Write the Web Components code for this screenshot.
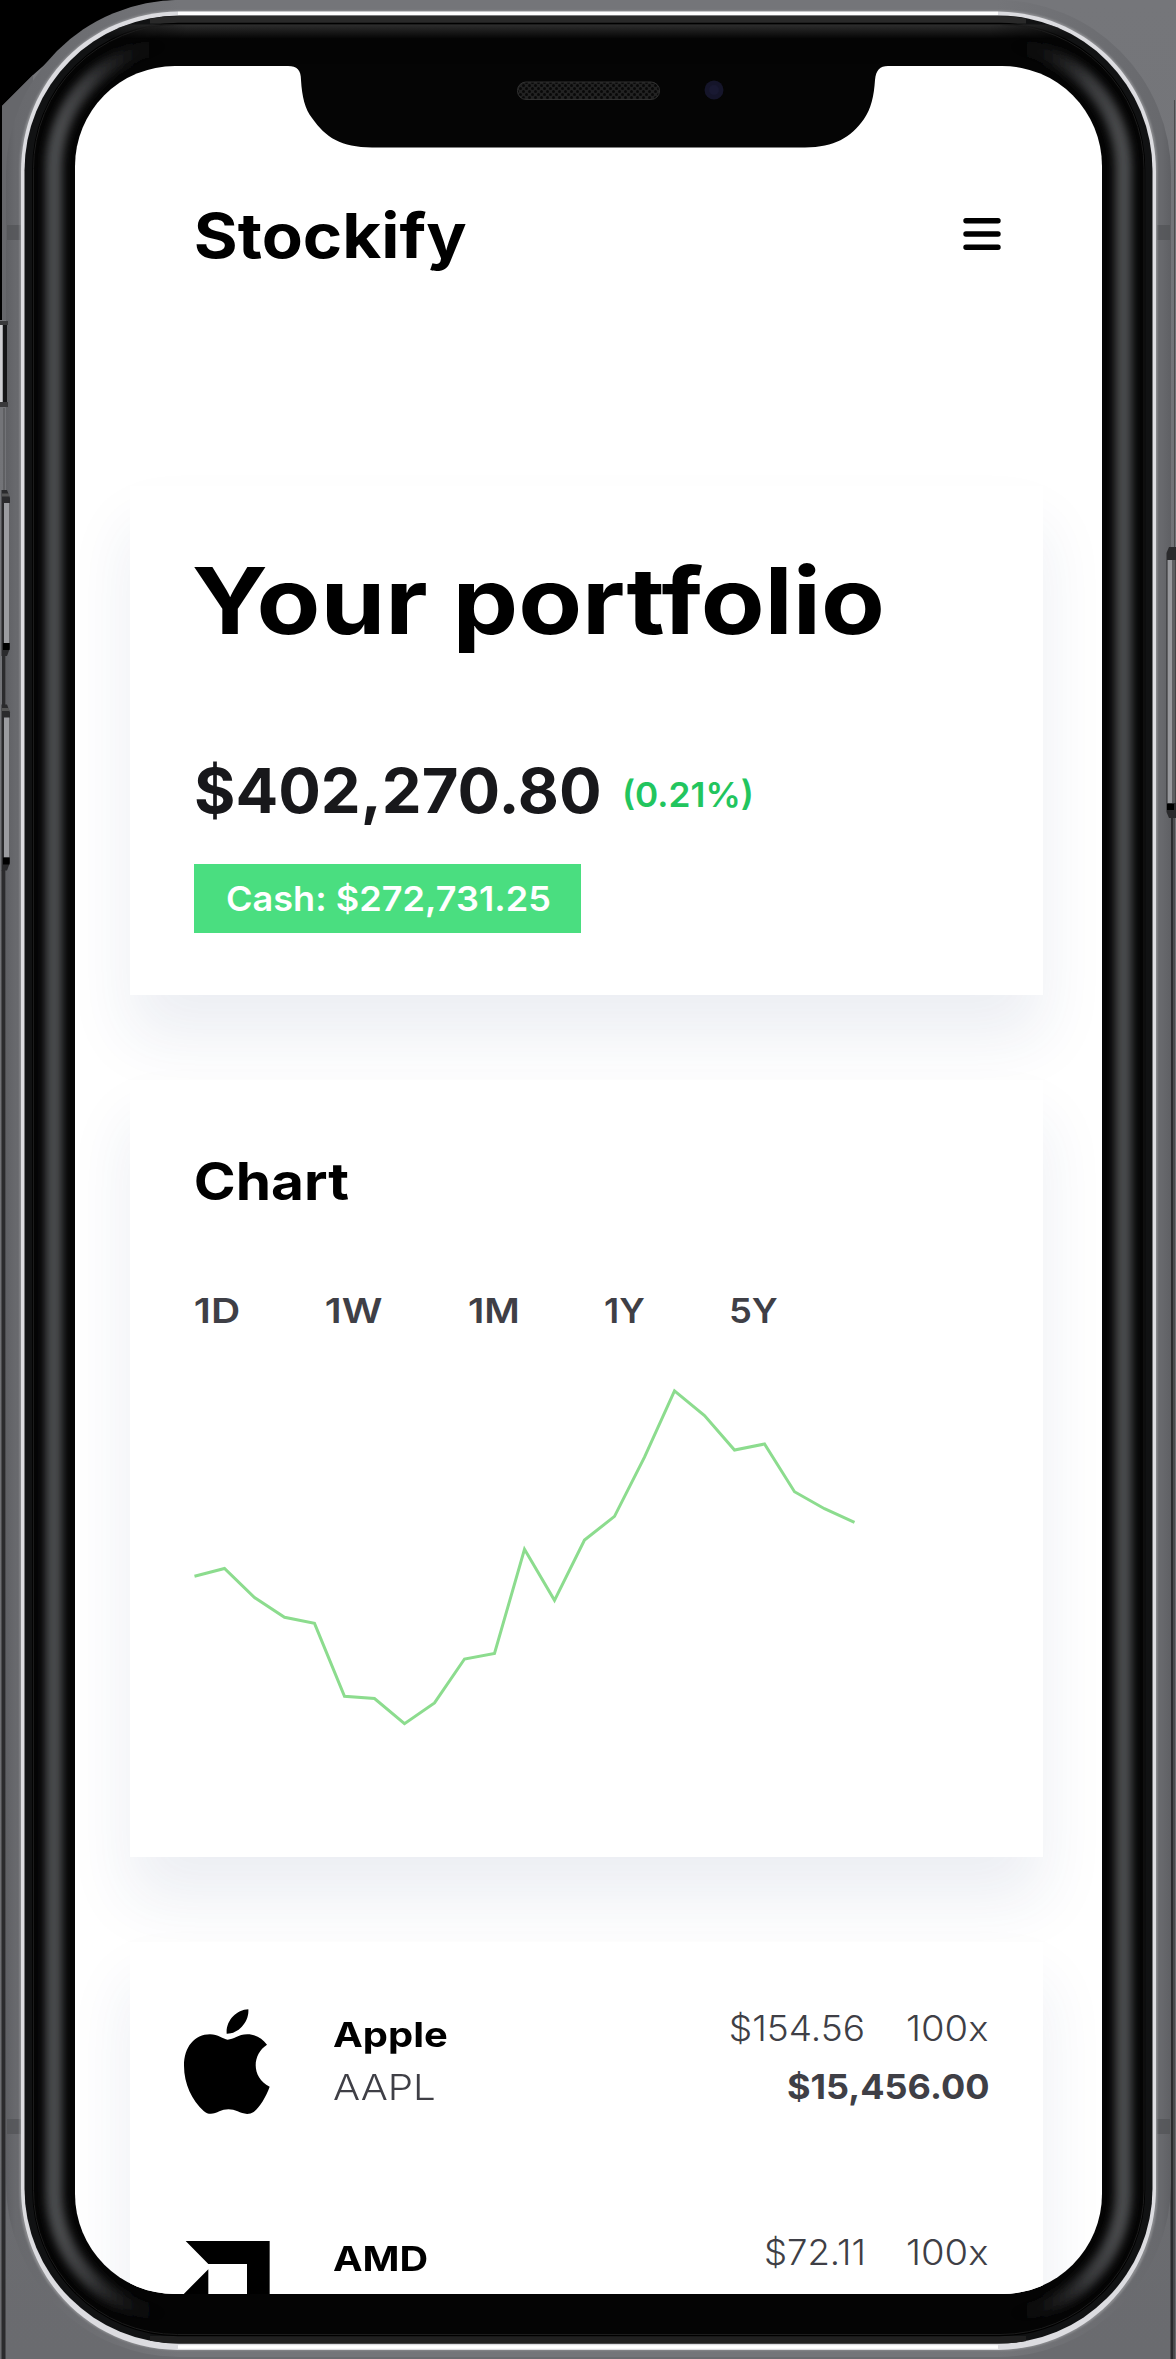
<!DOCTYPE html>
<html lang="en">
<head>
<meta charset="utf-8">
<title>Stockify</title>
<style>
html,body{margin:0;padding:0;background:#6d6e72}
body{width:1176px;height:2359px;overflow:hidden;font-family:Inter,"Open Sans",sans-serif}
</style>
</head>
<body>
<device-frame>
  <app-header></app-header>
  <portfolio-card></portfolio-card>
  <chart-card></chart-card>
  <holdings-card>
    <holding-row name="Apple,114" ticker="AAPL,101" price="$154.56,132" qty="100x,81" total="$15,456.00,200">
      <svg slot="icon" width="86" height="105" viewBox="70 86 258 315" style="display:block;margin-top:10px"><path d="M198 160C195 122 227 88 263 87C266 124 233 161 198 160ZM201 178C219 178 232 162 260 162C284 162 304 173 319 193C274 222 271 291 327 319C315 352 297 380 279 395C264 405 245 400 231 393C213 384 192 385 176 393C161 401 143 405 129 392C94 360 70 310 70 256C70 200 102 162 148 162C172 162 187 177 201 178Z"/></svg>
    </holding-row>
    <holding-row name="AMD,94" ticker="AMD,82" price="$72.11,97" qty="100x,81" total="$7,211.00,160">
      <svg slot="icon" width="86" height="86" viewBox="70 784 258 258" style="display:block;margin-top:18px"><path d="M75 784H327V1037L259 969V853H143ZM143 869V972H246L176 1041H70V942Z"/></svg>
    </holding-row>
  </holdings-card>
</device-frame>
<script>
const mount=(el,html)=>{el.attachShadow({mode:'open'}).innerHTML=html;return el.shadowRoot};

/* Text whose ink spans exactly the width given in "w". */
customElements.define('fit-text',class extends HTMLElement{
  connectedCallback(){
    if(this.shadowRoot)return;
    const r=mount(this,`<style>:host{display:block;flex:none;white-space:nowrap}span{display:inline-block;transform-origin:0 50%}</style><span><slot></slot></span>`);
    const w=+this.getAttribute('w'),s=r.querySelector('span'),c=getComputedStyle(this);
    const g=document.createElement('canvas').getContext('2d');
    g.font=`${c.fontWeight} ${c.fontSize} ${c.fontFamily}`;
    const m=g.measureText(this.textContent),l=-m.actualBoundingBoxLeft,k=w/(m.actualBoundingBoxRight-l);
    this.style.width=w+'px';
    s.style.transform=`translateX(${-l*k}px) scaleX(${k})`;
  }
});

customElements.define('device-frame',class extends HTMLElement{
  connectedCallback(){
    mount(this,`<style>
:host{display:block;position:relative;width:1176px;height:2359px;overflow:hidden}
svg{position:absolute;left:0;top:0;display:block}
.pad{position:relative;padding:66px 74px 65px 75px;height:2228px}
.screen{display:flex;flex-direction:column;height:2228px;border-radius:100px;overflow:hidden;background:#fff}
</style>
<svg width="1176" height="2359" viewBox="0 0 1176 2359">
<defs>
<linearGradient id="bg" x2="0" y2="1"><stop offset="0" stop-color="#75767a"/><stop offset="1" stop-color="#6a6b6f"/></linearGradient>
<linearGradient id="band" gradientUnits="userSpaceOnUse" x1="6" x2="1171" y1="0" y2="0"><stop offset="0" stop-color="#5f6064"/><stop offset=".008" stop-color="#68696d"/><stop offset=".15" stop-color="#747579"/><stop offset=".85" stop-color="#747579"/><stop offset=".992" stop-color="#68696d"/><stop offset="1" stop-color="#5f6064"/></linearGradient>
<linearGradient id="fade" gradientUnits="userSpaceOnUse" x1="0" x2="1176" y1="0" y2="0"><stop offset=".05" stop-color="#4a4b4d"/><stop offset=".075" stop-color="#38393b"/><stop offset=".15" stop-color="#000" stop-opacity="0"/><stop offset=".85" stop-color="#000" stop-opacity="0"/><stop offset=".925" stop-color="#38393b"/><stop offset=".955" stop-color="#4a4b4d"/></linearGradient>
<linearGradient id="top" x2="0" y2="1"><stop offset="0" stop-color="#2e2e2e"/><stop offset="1" stop-color="#050505"/></linearGradient>
<linearGradient id="mx" gradientUnits="userSpaceOnUse" x1="60" x2="1116" y1="0" y2="0"><stop offset="0" stop-color="#000"/><stop offset=".12" stop-color="#fff"/><stop offset=".88" stop-color="#fff"/><stop offset="1" stop-color="#000"/></linearGradient>
<mask id="mt"><rect width="1176" height="60" fill="url(#mx)"/></mask>
<filter id="b" filterUnits="userSpaceOnUse" x="0" y="0" width="1176" height="2359"><feGaussianBlur stdDeviation="4.5"/></filter>
<filter id="b1" filterUnits="userSpaceOnUse" x="0" y="0" width="1176" height="2359"><feGaussianBlur stdDeviation="1"/></filter>
<clipPath id="body"><rect x="25" y="16" width="1127.5" height="2327.5" rx="153"/></clipPath>
</defs>
<rect width="1176" height="2359" fill="url(#bg)"/>
<path d="M0 0H176C140 3 112 12 93 25C82 32 74 39 67 45L33 75L2 106V320H0Z" fill="#000"/>
<path d="M2 106L33 75V320H2Z" fill="#66676b"/>
<g fill="#2b2b2d"><rect x="2" y="655" width="3.500" height="50"/><rect x="2" y="870" width="3.500" height="1489"/><rect x="1170.500" y="815" width="3" height="1544"/></g>
<path d="M4 408V490M1.500 870V2359M1174.500 100V2359" stroke="#4c4c4e" fill="none"/>
<rect x="6" y="0" width="1165" height="2357" rx="174" fill="url(#band)"/>
<g fill="#505155" opacity=".65"><rect x="7" y="225" width="14" height="15"/><rect x="1157" y="225" width="13" height="15"/><rect x="7" y="2119" width="14" height="15"/><rect x="1157" y="2119" width="13" height="15"/></g>
<rect x="21" y="12" width="1135" height="2337" rx="157" fill="none" stroke="#9b9c9f" stroke-width="2" filter="url(#b1)"/>
<path d="M178 11.500H998C1086 12.500 1156 81 1156 172V2188C1156 2278 1086 2349 998 2350H178C90 2349 21 2278 21 2188V172C21 81 90 12.500 178 11.500Z" fill="#dcdce0"/>
<path d="M178 13.500H998M178 2347H998" stroke="#fff" stroke-width="3.500"/>
<rect x="24.500" y="15.500" width="1128" height="2328" rx="155" fill="#111213"/>
<g clip-path="url(#body)">
<rect x="150" y="15.500" width="876" height="8" fill="#292929"/><rect x="150" y="2336" width="876" height="8" fill="#202020"/>
<rect x="33" y="23.500" width="1111.500" height="2312" rx="145" fill="#040404" stroke="#000" stroke-width="1.500"/>
<rect x="33" y="24.500" width="1111.500" height="14" fill="url(#top)" mask="url(#mt)"/>
<rect x="33.500" y="24.500" width="1110.500" height="2310" rx="144" fill="none" stroke="#1c1c1c"/>
<rect x="54" y="46" width="1069.500" height="2268" rx="122" fill="none" stroke="url(#fade)" stroke-width="17" filter="url(#b)"/>
</g>
<rect x="0" y="325" width="2.500" height="77" fill="#cfcfd2"/><path d="M0 321H8V325H0ZM0 402H8V407H0Z" fill="#39393b"/><rect x="3" y="325" width="4" height="77" fill="#151517"/>
<g id="v"><path d="M1.500 490H7L10 498V648L7 656H1.500Z" fill="#2a2a2c"/><rect x="4" y="503" width="5.500" height="140" fill="#9b9ca0"/><rect x="3" y="643" width="6.500" height="7" fill="#000"/><path d="M2 495H9" stroke="#555" stroke-width="3"/></g>
<use href="#v" y="214.500"/>
<path d="M1176 547H1169L1166.500 553V812L1169 818H1176Z" fill="#2a2a2c"/><rect x="1167.500" y="560" width="5" height="243" fill="#97989c"/><rect x="1172.500" y="560" width="3" height="243" fill="#5e5f61"/><rect x="1167" y="804" width="7" height="6" fill="#000"/>
</svg>
<div class="pad"><div class="screen"><slot></slot></div></div>
<svg width="1176" height="160" viewBox="0 0 1176 160">
<defs><pattern id="mesh" width="6" height="6" patternUnits="userSpaceOnUse"><rect width="6" height="6" fill="#222"/><circle cx="1.500" cy="1.500" r="1.500" fill="#080808"/><circle cx="4.500" cy="4.500" r="1.500" fill="#080808"/></pattern></defs>
<path d="M288 64V66C297 66 301 70 301 80C302 97 305 109 312 118C326 138 341 147 372 147.500H805C835 147 850 138 864 119C871 109 874 96 875 80C876 70 880 66 888 66V64Z" fill="#050505"/>
<rect x="517.500" y="82" width="142" height="17.500" rx="8.500" fill="url(#mesh)" stroke="#303030"/>
<circle cx="714" cy="90" r="9.500" fill="#15152a"/><circle cx="714" cy="90" r="5" fill="#191932"/>
</svg>`);
  }
});

customElements.define('app-header',class extends HTMLElement{
  connectedCallback(){
    mount(this,`<style>
:host{display:flex;flex:none;align-items:center;justify-content:space-between;margin-top:130px;height:80px;padding:0 101px 0 120.500px}
.brand{font-size:61.600px;line-height:80px;font-weight:700;color:#000}
svg{display:block;margin-bottom:4px}
</style><fit-text class="brand" w="270.500">Stockify</fit-text>
<svg width="38" height="34" viewBox="0 0 38 34"><path d="M3 3.700H35M3 17H35M3 30.300H35" stroke="#000" stroke-width="5.400" stroke-linecap="round"/></svg>`);
  }
});

const cardCss=`:host{display:flex;flex:none;flex-direction:column;position:relative;box-sizing:border-box;width:913px;margin-left:55px;background:#fff;box-shadow:0 42px 60px rgba(40,55,115,.085)}`;

customElements.define('portfolio-card',class extends HTMLElement{
  connectedCallback(){
    mount(this,`<style>${cardCss}
:host{margin-top:210px;height:509px;padding:58px 64px 0}
.title{font-size:92.400px;line-height:112px;font-weight:700;color:#000}
.value{display:flex;margin:95px 0 0 2px;gap:26px;font-weight:700;font-size:61.600px;line-height:80px;color:#18181b}
.pct{font-size:34.700px;padding-top:3px;height:77px;font-weight:600;color:#22c55e}
.cash{align-self:flex-start;box-sizing:border-box;margin-top:33px;width:387px;height:69px;padding-left:33px;background:#4ade80;color:#fff;font-size:34.700px;line-height:69px;font-weight:600}
</style>
<fit-text class="title" w="688">Your portfolio</fit-text>
<div class="value"><fit-text w="403">$402,270.80</fit-text><fit-text class="pct" w="126">(0.21%)</fit-text></div>
<div class="cash"><fit-text w="323">Cash: $272,731.25</fit-text></div>`);
  }
});

customElements.define('chart-card',class extends HTMLElement{
  connectedCallback(){
    mount(this,`<style>${cardCss}
:host{margin-top:85px;height:777px;padding:69.500px 64px 0}
.title{font-size:52px;line-height:64px;font-weight:700;color:#000;margin-left:2px}
nav{display:flex;gap:87px;margin:74.500px 0 0 1px;font-size:34.700px;line-height:44px;font-weight:600;color:#3f3f46}
svg{display:block;margin-top:48px}
</style>
<fit-text class="title" w="153">Chart</fit-text>
<nav><fit-text w="44">1D</fit-text><fit-text w="56">1W</fit-text><fit-text w="48.500">1M</fit-text><fit-text w="39">1Y</fit-text><fit-text w="46">5Y</fit-text></nav>
<svg width="670" height="360" viewBox="194 1380 670 360"><polyline fill="none" stroke="#8cdc8e" stroke-width="3" points="194.500,1576.200 224.500,1568.500 254.500,1597.600 284.500,1617.300 314.500,1623.400 344.500,1696.300 374.500,1698.500 404.500,1723.700 434.500,1702.900 464.500,1659 494.500,1653.500 524.500,1549.300 554.500,1600.300 584.500,1540 614.500,1516.400 644.500,1457.200 674.500,1390.800 704.500,1415.500 734.500,1450 764.500,1444 794.500,1491.700 824.500,1508.700 854.500,1522.400"/></svg>`);
  }
});

customElements.define('holdings-card',class extends HTMLElement{
  connectedCallback(){
    mount(this,`<style>${cardCss}:host{margin-top:85px;height:520px;padding:57px 55px 0 53.500px}</style><slot></slot>`);
  }
});

customElements.define('holding-row',class extends HTMLElement{
  connectedCallback(){
    const t=(k,c='')=>{const v=this.getAttribute(k),i=v.lastIndexOf(',');return `<fit-text class="${c}" w="${v.slice(i+1)}">${v.slice(0,i)}</fit-text>`};
    mount(this,`<style>
:host{display:flex;flex:none;align-items:flex-start;height:224px;font-size:34.700px;color:#3f3f46}
.who{margin:8.500px 0 0 63px;line-height:53px;font-weight:300}
.name{font-weight:700;color:#000}
.sum{margin-left:auto;display:flex;flex-direction:column;align-items:flex-end;line-height:58px;font-weight:300}
.line{display:flex;gap:44.500px}
.total{font-weight:700}
</style><slot name="icon"></slot>
<div class="who">${t('name','name')}${t('ticker')}</div>
<div class="sum"><div class="line">${t('price')}${t('qty')}</div>${t('total','total')}</div>`);
  }
});
</script>
</body>
</html>
